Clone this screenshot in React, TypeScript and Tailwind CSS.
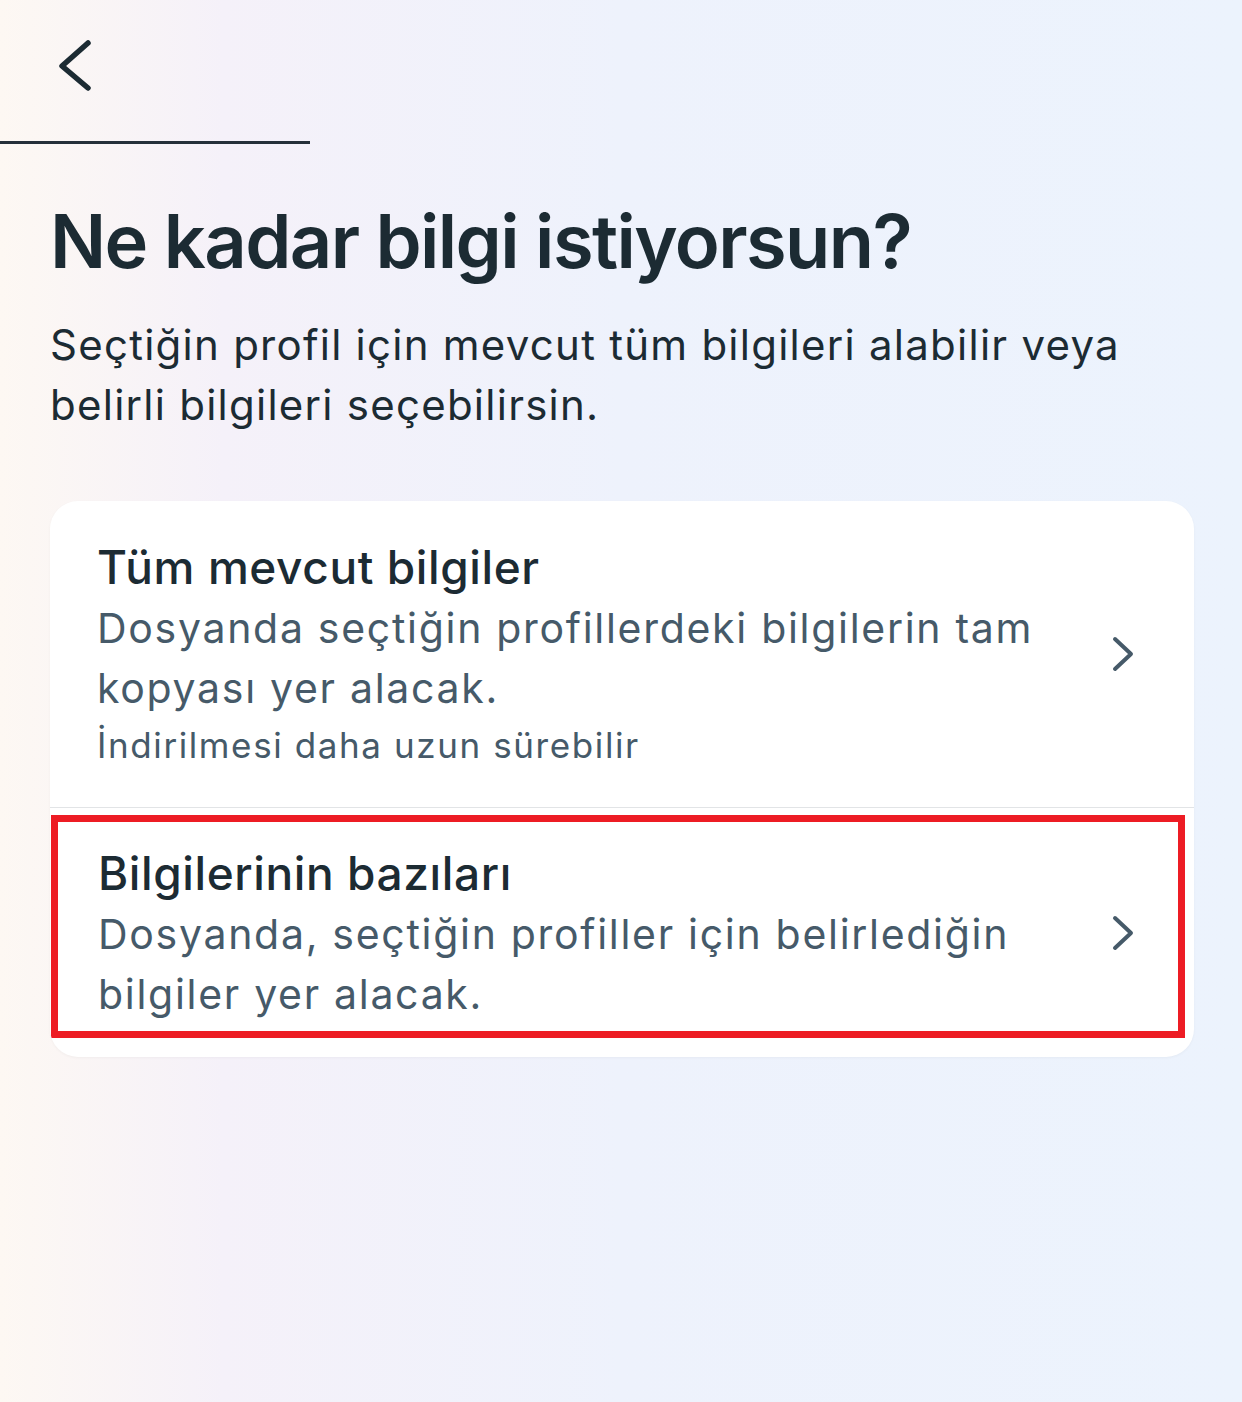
const font = "font-['Inter','Noto_Sans',sans-serif]";

function Chevron() {
  return (
    <svg width="28" height="40" viewBox="0 0 28 40" fill="none" className="shrink-0">
      <polyline points="6,5 22,20 6,35" stroke="#465a69" strokeWidth="4" strokeLinecap="round" strokeLinejoin="round" />
    </svg>
  );
}

function Option(props: Readonly<{ title: string; lines: string[]; note?: string }>) {
  return (
    <div className="flex items-center">
      <div className="min-w-0 flex-1">
        <div className="text-[46px] font-medium leading-[62px] tracking-[0.6px] text-[#1c2b33]">{props.title}</div>
        {props.lines.map((l) => (
          <div key={l} className="whitespace-nowrap text-[41px] leading-[60px] tracking-[1.7px] text-[#465a69]">
            {l}
          </div>
        ))}
        {props.note ? (
          <div className="text-[35px] leading-[54px] tracking-[1.6px] text-[#465a69]">{props.note}</div>
        ) : null}
      </div>
      <Chevron />
    </div>
  );
}

export default function App() {
  return (
    <div
      className={`${font} h-[1402px] w-[1242px] overflow-hidden bg-[linear-gradient(90deg,#fdf8f3_0%,#f5f1f9_18%,#eef2fc_50%,#ecf3fd_100%)]`}
    >
      <div className="h-[141px] pl-[54px] pt-[36px]">
        <svg width="40" height="60" viewBox="0 0 40 60" fill="none">
          <polyline points="34,7 8,30 34,52" stroke="#1c2b33" strokeWidth="5.5" strokeLinecap="round" strokeLinejoin="round" />
        </svg>
      </div>
      <div className="h-[3px] w-[310px] bg-[#25303a]" />

      <div className="px-[50px]">
        <h1 className="mt-[52px] text-[74px] font-semibold leading-[90px] tracking-[-1.6px] text-[#1c2b33]">
          Ne kadar bilgi istiyorsun?
        </h1>
        <p className="mt-[29px] text-[42px] leading-[60px] tracking-[1.25px] text-[#1c2b33]">
          Seçtiğin profil için mevcut tüm bilgileri alabilir veya belirli bilgileri seçebilirsin.
        </p>

        <div className="mt-[66px] w-[1144px] overflow-hidden rounded-[28px] bg-white shadow-[0_1px_3px_rgba(0,0,0,0.04)]">
          <div className="pb-[35px] pl-[47px] pr-[57px] pt-[35px]">
            <Option
              title="Tüm mevcut bilgiler"
              lines={["Dosyanda seçtiğin profillerdeki bilgilerin tam", "kopyası yer alacak."]}
              note="İndirilmesi daha uzun sürebilir"
            />
          </div>
          <div className="h-[1px] bg-[#e2e4e6]" />
          <div className="mb-[19px] ml-[1px] mr-[9px] mt-[7px] border-[7px] border-[#ed1c24] pb-[7px] pl-[40px] pr-[41px] pt-[20px]">
            <Option
              title="Bilgilerinin bazıları"
              lines={["Dosyanda, seçtiğin profiller için belirlediğin", "bilgiler yer alacak."]}
            />
          </div>
        </div>
      </div>
    </div>
  );
}
